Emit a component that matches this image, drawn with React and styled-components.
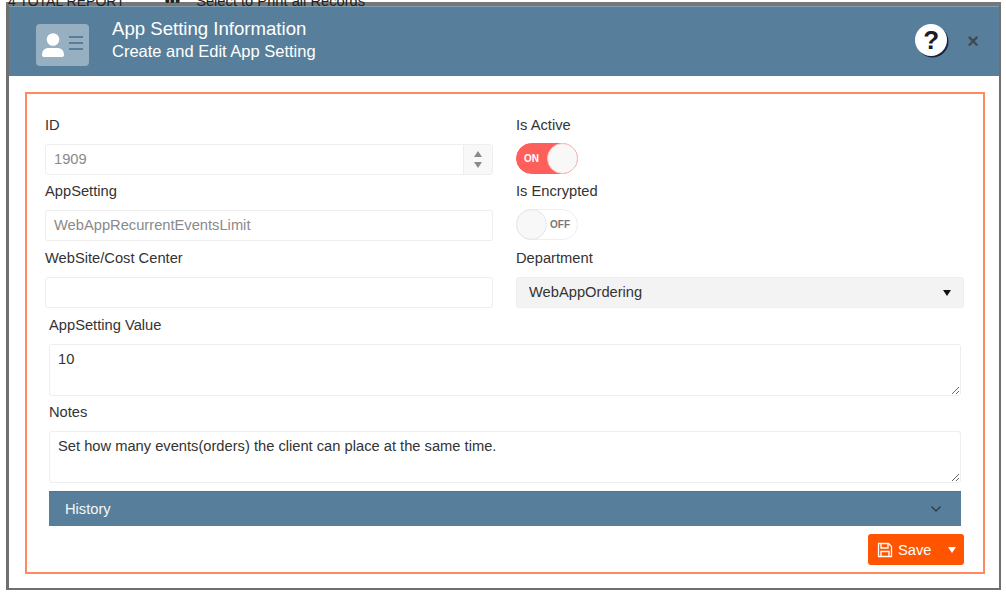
import React from "react";
import styled, { createGlobalStyle } from "styled-components";
import { ChevronDown } from "lucide-react";

const Global = createGlobalStyle`
  html, body { margin: 0; padding: 0; background: #fff; width: 1006px; height: 604px; overflow: hidden; }
  * { box-sizing: border-box; }
  body { font-family: "Liberation Sans", Arial, sans-serif; color: #333; }
`;

const Page = styled.div`
  width: 1006px;
  height: 604px;
  padding: 0 5px 14px 6px;
  display: flex;
  flex-direction: column;
`;
const BackStrip = styled.div`
  height: 6px;
  flex: none;
  overflow: hidden;
  display: flex;
  align-items: flex-start;
  padding-left: 2px;
  background: linear-gradient(#fff 0 2px, #777 2px);
`;
const BackText = styled.div`
  margin: -7px 0 0 ${(p) => p.$gap || 0}px;
  font-size: ${(p) => p.$size || 14.7}px;
  line-height: 16px;
  color: #222;
  white-space: nowrap;
`;
const Modal = styled.div`
  flex: 1;
  border: solid #6f6f6f;
  border-width: 0 2px 2px 3px;
  background: #fff;
  display: flex;
  flex-direction: column;
`;
const Header = styled.header`
  height: 70px;
  flex: none;
  background: #577f9b;
  border-top: 1px solid #7f9fb5;
  display: flex;
  align-items: center;
  padding: 0 20px 0 27px;
  color: #fff;
`;
const Avatar = styled.div`
  width: 53px;
  height: 42px;
  margin: 7px 23px 0 0;
  background: #97b0c1;
  border-radius: 4px;
  display: flex;
`;
const Titles = styled.div`
  flex: 1;
  display: flex;
  flex-direction: column;
  gap: 2px;
  margin-top: -4px;
`;
const Title = styled.div`
  font-size: 18.6px;
  line-height: 21px;
`;
const Sub = styled.div`
  font-size: 16.5px;
  line-height: 20px;
`;
const Help = styled.div`
  width: 32px;
  height: 32px;
  border-radius: 50%;
  background: #fff;
  box-shadow: 1.5px 1.5px 0 #1c2340;
  color: #1b1b2a;
  font-size: 26px;
  font-weight: 700;
  line-height: 32px;
  text-align: center;
  margin: -4px 20px 0 0;
`;
const Close = styled.div`
  font-size: 20px;
  font-weight: 700;
  line-height: 20px;
  color: #3f4a52;
  margin-top: -2px;
`;
const Body = styled.div`
  flex: 1;
  min-height: 0;
  padding: 16px 14px 14px 16px;
  display: flex;
`;
const Frame = styled.div`
  flex: 1;
  min-width: 0;
  border: 2px solid #ff8a5c;
  padding: 21px 19px 0 18px;
  display: flex;
  flex-direction: column;
`;
const Grid = styled.div`
  display: grid;
  grid-template-columns: 448px 448px;
  column-gap: 23px;
`;
const Field = styled.div`
  height: ${(p) => p.$h || 67}px;
`;
const Label = styled.label`
  display: block;
  font-size: 14.7px;
  line-height: 20px;
  height: 20px;
  color: #333;
  margin-bottom: 9px;
`;
const Input = styled.div`
  width: 100%;
  height: 31px;
  border: 1px solid #eeeeee;
  border-radius: 3px;
  background: #fff;
  padding: 0 8px;
  font-size: 14.7px;
  line-height: 29px;
  color: #8a8a8a;
  display: flex;
  justify-content: space-between;
`;
const NumberInput = styled(Input)`
  padding-right: 0;
`;
const Spin = styled.div`
  width: 29px;
  height: 100%;
  border-left: 1px solid #eee;
  background: #f8f8f8;
  display: flex;
  flex-direction: column;
  align-items: center;
  justify-content: center;
  gap: 5px;
`;
const Arrow = styled.span`
  width: 0;
  height: 0;
  border-left: 4px solid transparent;
  border-right: 4px solid transparent;
  ${(p) => (p.$up ? "border-bottom: 6px solid #8a8a8a;" : "border-top: 6px solid #8a8a8a;")}
`;
const Toggle = styled.div`
  width: 62px;
  height: 31px;
  border-radius: 16px;
  background: ${(p) => (p.$on ? "#ff5f5a" : "#fff")};
  border: 1px solid ${(p) => (p.$on ? "#ff5f5a" : "#eee")};
  display: flex;
  flex-direction: ${(p) => (p.$on ? "row" : "row-reverse")};
  align-items: center;
  justify-content: space-between;
  margin-top: -1px;
`;
const ToggleText = styled.span`
  font-size: 10px;
  font-weight: 700;
  color: ${(p) => (p.$on ? "#fff" : "#777")};
  margin: ${(p) => (p.$on ? "0 0 0 7px" : "0 7px 0 0")};
`;
const Knob = styled.span`
  width: 31px;
  height: 31px;
  margin: -1px;
  border-radius: 50%;
  background: #f8f8f8;
  border: 1px solid ${(p) => (p.$on ? "#f6c6c3" : "#e6e6e6")};
`;
const Select = styled.div`
  height: 31px;
  background: #f3f3f3;
  border: 1px solid #eee;
  border-radius: 3px;
  padding: 0 12px;
  font-size: 14.7px;
  line-height: 29px;
  color: #333;
  display: flex;
  align-items: center;
  justify-content: space-between;
`;
const SelectArrow = styled.span`
  width: 0;
  height: 0;
  border-left: 4px solid transparent;
  border-right: 4px solid transparent;
  border-top: 6px solid #111;
`;
const Wide = styled.div`
  padding: 0 3px 0 4px;
`;
const Area = styled.textarea`
  display: block;
  width: 100%;
  height: 52px;
  border: 1px solid #eee;
  border-radius: 3px;
  padding: 6px 8px;
  margin: 0 0 6px;
  font: 14.7px/16px "Liberation Sans", Arial, sans-serif;
  color: #333;
  outline: none;
  background: #fff;
`;
const History = styled.div`
  height: 35px;
  margin-top: 8px;
  background: #577f9b;
  border-top: 1px solid #4f7590;
  display: flex;
  align-items: center;
  justify-content: space-between;
  padding: 0 17px 0 16px;
  font-size: 14.7px;
  color: #f4f7f9;
  svg { color: #2f3a44; }
`;
const Footer = styled.div`
  display: flex;
  justify-content: flex-end;
  padding-top: 8px;
`;
const SaveButton = styled.button`
  width: 96px;
  height: 31px;
  border: 0;
  border-radius: 3px;
  background: #ff5500;
  color: #fff;
  display: flex;
  align-items: center;
  padding: 0 0 0 9px;
  font: 14.7px "Liberation Sans", Arial, sans-serif;
`;
const SaveLabel = styled.span`
  margin-left: 5px;
  flex: 1;
  text-align: left;
`;
const Caret = styled.span`
  width: 0;
  height: 0;
  border-left: 4.500px solid transparent;
  border-right: 4.500px solid transparent;
  border-top: 6px solid #fff;
  margin-right: 8px;
`;

const AvatarIcon = () => (
  <svg width="53" height="42" viewBox="0 0 53 42" fill="none">
    <circle cx="17" cy="15.500" r="6.300" fill="#fff" />
    <path d="M6 31c0-4.500 3-7 6.500-7h9c3.500 0 6.500 2.500 6.500 7 0 1.300-.8 2-2 2H8c-1.200 0-2-.7-2-2z" fill="#fff" />
    <path d="M33 13h14M33 19h14M33 25h14" stroke="#577f9b" strokeWidth="2.200" />
  </svg>
);
const SaveIcon = () => (
  <svg width="16" height="16" viewBox="0 0 16 16" fill="none" stroke="#fff" strokeWidth="1.300">
    <path d="M1.500 1.500h10l3 3v10h-13z" />
    <path d="M4 1.500v4.500h7V1.500M4 14.500V9.500h8v5" />
  </svg>
);

export default function App() {
  return (
    <Page>
      <Global />
      <BackStrip>
        <BackText $size={14}>4 TOTAL REPORT</BackText>
        <BackText $gap={40}>•••</BackText>
        <BackText $gap={16}>Select to Print all Records</BackText>
      </BackStrip>
      <Modal>
        <Header>
          <Avatar><AvatarIcon /></Avatar>
          <Titles>
            <Title>App Setting Information</Title>
            <Sub>Create and Edit App Setting</Sub>
          </Titles>
          <Help>?</Help>
          <Close>×</Close>
        </Header>
        <Body>
          <Frame>
            <Grid>
              <Field $h={66}>
                <Label>ID</Label>
                <NumberInput>1909<Spin><Arrow $up /><Arrow /></Spin></NumberInput>
              </Field>
              <Field $h={66}>
                <Label>Is Active</Label>
                <Toggle $on><ToggleText $on>ON</ToggleText><Knob $on /></Toggle>
              </Field>
              <Field>
                <Label>AppSetting</Label>
                <Input>WebAppRecurrentEventsLimit</Input>
              </Field>
              <Field>
                <Label>Is Encrypted</Label>
                <Toggle><ToggleText>OFF</ToggleText><Knob /></Toggle>
              </Field>
              <Field>
                <Label>WebSite/Cost Center</Label>
                <Input />
              </Field>
              <Field>
                <Label>Department</Label>
                <Select>WebAppOrdering<SelectArrow /></Select>
              </Field>
            </Grid>
            <Wide>
              <Label>AppSetting Value</Label>
              <Area readOnly value="10" />
              <Label>Notes</Label>
              <Area readOnly value="Set how many events(orders) the client can place at the same time." />
              <History>History<ChevronDown size={16} /></History>
            </Wide>
            <Footer>
              <SaveButton><SaveIcon /><SaveLabel>Save</SaveLabel><Caret /></SaveButton>
            </Footer>
          </Frame>
        </Body>
      </Modal>
    </Page>
  );
}
